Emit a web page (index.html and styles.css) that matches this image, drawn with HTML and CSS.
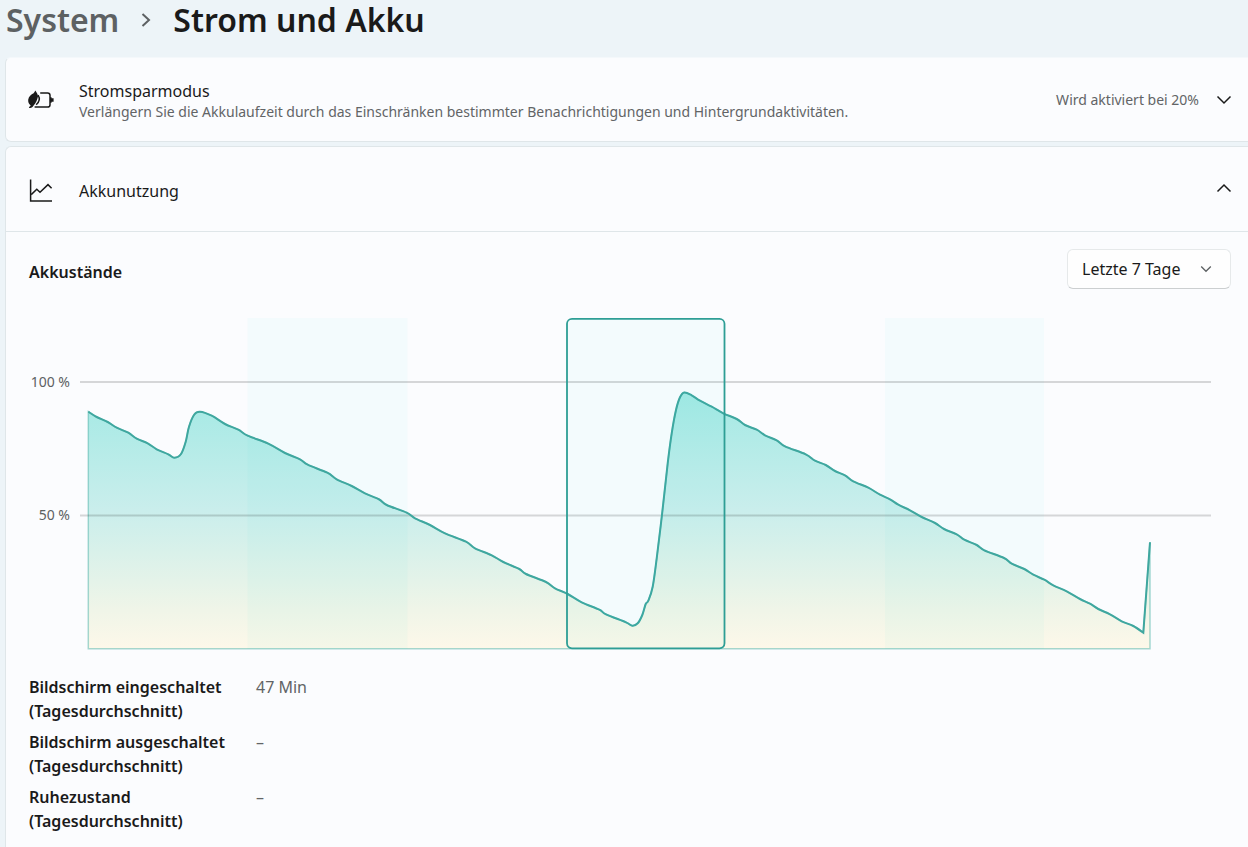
FILE: index.html
```html
<!DOCTYPE html>
<html lang="de">
<head>
    <meta charset="UTF-8">
    <meta name="viewport" content="width=device-width, initial-scale=1.0">
    <title>Strom und Akku</title>
    <link rel="stylesheet" href="styles.css">
</head>
<body>
    <nav class="breadcrumb">
        <a href="#">System</a>
        <svg class="separator" width="10" height="16" viewBox="0 0 10 16"><path d="M1.5 2 L8 8 L1.5 14"/></svg>
        <h1>Strom und Akku</h1>
    </nav>

    <main>
        <section class="card">
            <button class="card-header" type="button" aria-expanded="false">
                <svg class="icon" width="28" height="28" viewBox="0 0 28 28">
                    <path class="solid" d="M8.3 4.6 C9.3 6.2 11 8 11 10.6 C10.4 13.6 9 17 6.6 19.6 C5.8 21 4.4 22.3 2.6 22 C1.6 21.6 1.9 20.6 2.9 20.4 L3.7 19.4 C1.8 18.3 1 16.3 1.2 13.8 C1.6 10.4 4.2 8.2 6.6 7.2 C7.3 6.6 7.8 5.6 8.3 4.6 Z"/>
                    <path d="M11.1 9.2 C13 12.4 12.4 16 9.2 18.7"/>
                    <path d="M13.2 6.9 H20.6 Q23 6.9 23 9.3 V18.7 Q23 21.1 20.6 21.1 H7.6"/>
                    <path class="solid" d="M23 11.2 H24.6 V12.2 H26.6 V15.8 H24.6 V16.8 H23 Z"/>
                </svg>
                <span class="card-text">
                    <span class="card-title">Stromsparmodus</span>
                    <span class="card-description">Verlängern Sie die Akkulaufzeit durch das Einschränken bestimmter Benachrichtigungen und Hintergrundaktivitäten.</span>
                </span>
                <span class="card-value">Wird aktiviert bei 20%</span>
                <svg class="chevron" width="16" height="16" viewBox="0 0 16 16"><path d="M1.5 4.5 L8 11 L14.5 4.5"/></svg>
            </button>
        </section>

        <section class="card">
            <button class="card-header" type="button" aria-expanded="true">
                <svg class="icon" width="28" height="28" viewBox="0 0 28 28">
                    <path d="M3.6 4.5 V26 H25"/>
                    <path d="M4.2 19.6 L9.8 14.3 L13 17.2 L21 9.6 L24.6 13.2"/>
                </svg>
                <span class="card-text">
                    <span class="card-title">Akkunutzung</span>
                </span>
                <svg class="chevron" width="16" height="16" viewBox="0 0 16 16"><path d="M1.5 10.5 L8 4 L14.5 10.5"/></svg>
            </button>

            <div class="card-body">
                <div class="chart-header">
                    <h2>Akkustände</h2>
                    <div class="range">
                        <select aria-label="Zeitraum">
                            <option>Letzte 24 Stunden</option>
                            <option selected>Letzte 7 Tage</option>
                        </select>
                        <svg width="12" height="12" viewBox="0 0 12 12"><path d="M1.2 3.5 L6 8.3 L10.8 3.5"/></svg>
                    </div>
                </div>

                <svg class="chart" viewBox="29 317 1202 334">
                    <defs>
                        <linearGradient id="level" gradientUnits="userSpaceOnUse" x1="0" y1="393" x2="0" y2="649">
                            <stop offset="0" stop-color="#a3e9e4"/>
                            <stop offset="0.46" stop-color="#caeeec"/>
                            <stop offset="0.62" stop-color="#d9f1ea"/>
                            <stop offset="0.85" stop-color="#f0f5e8"/>
                            <stop offset="1" stop-color="#fdf8e9"/>
                        </linearGradient>
                    </defs>
                    <path id="area" class="area"/>
                    <rect class="day" x="247.5" y="318" width="160" height="331"/>
                    <rect class="day" x="885" y="318" width="159" height="331"/>
                    <path class="grid" d="M80 382 H1211 M80 515.5 H1211"/>
                    <text x="70" y="387">100 %</text>
                    <text x="70" y="520">50 %</text>
                    <path id="line" class="line"/>
                    <rect class="day selected" x="567" y="318.8" width="157.5" height="329.5" rx="5"/>
                </svg>

                <dl class="stats">
                    <dt>Bildschirm eingeschaltet (Tagesdurchschnitt)</dt>
                    <dd>47 Min</dd>
                    <dt>Bildschirm ausgeschaltet (Tagesdurchschnitt)</dt>
                    <dd>–</dd>
                    <dt>Ruhezustand (Tagesdurchschnitt)</dt>
                    <dd>–</dd>
                </dl>
            </div>
        </section>
    </main>

    <script>
        const points = [
            [88.3, 411.7], [96.7, 417], [107.7, 422], [116.7, 427.7], [128.3, 432.7], [136.7, 438.7],
            [147.7, 443.3], [156.7, 449.3], [168.3, 454.3], [174.3, 457.7], [181, 454], [185.7, 441.7],
            [189, 426.7], [194.3, 414.5], [200, 411.7], [211.7, 415.7], [225, 424], [238.3, 429.7],
            [247.7, 435.7], [268.3, 443.7], [285, 453], [300, 459.3], [307.7, 464.7], [327.3, 472.7],
            [336.7, 479.3], [351.7, 486], [365, 493.3], [379.3, 499.5], [386.7, 505], [406.7, 512.7],
            [415, 518.3], [430, 525], [445, 533.3], [466, 541.7], [475, 548.3], [491.7, 555.3],
            [503.3, 562], [519.3, 569], [526, 574], [546, 582], [555, 588.3], [567.7, 594],
            [581.7, 602.3], [599.3, 609.7], [606, 614.3], [626, 622.3], [632.3, 625.7], [637.7, 623.3],
            [642.3, 615], [645.7, 604], [648.3, 600.7], [652.7, 586.7], [656.7, 558.3], [662.3, 512],
            [667.7, 463.3], [671.7, 433.3], [676, 410], [680, 397.3], [684.3, 392.5], [691.7, 395.3],
            [700, 400.7], [711.7, 406.7], [723.3, 413.3], [736.7, 419], [745, 425], [756.7, 429.7],
            [765, 435.3], [776.7, 440.3], [785, 446.3], [805.7, 454.3], [815, 460.7], [825.7, 465],
            [835, 471], [845, 475.3], [853.3, 481.3], [868.3, 487.7], [880, 494.7], [890, 499.3],
            [898.3, 504.7], [910, 510.3], [921.7, 517], [935, 523], [944, 529], [956.7, 534.3],
            [964.3, 539.7], [976.7, 545], [984.3, 550.3], [1004, 558], [1011.7, 563.7], [1024.3, 569],
            [1033.3, 574.7], [1044.3, 579.7], [1053.3, 585.3], [1066.7, 591.3], [1080, 599], [1090, 603.7],
            [1098.3, 609], [1110, 614.3], [1121.7, 621.3], [1133.3, 626], [1143.3, 632.7]
        ];

        // smooth curve through all points
        function curve(pts) {
            let d = 'M' + pts[0];
            for (let i = 0; i < pts.length - 1; i++) {
                const p0 = pts[i - 1] || pts[i];
                const p1 = pts[i];
                const p2 = pts[i + 1];
                const p3 = pts[i + 2] || p2;
                d += ' C' + [
                    p1[0] + (p2[0] - p0[0]) / 6, p1[1] + (p2[1] - p0[1]) / 6,
                    p2[0] - (p3[0] - p1[0]) / 6, p2[1] - (p3[1] - p1[1]) / 6,
                    p2[0], p2[1]
                ].join(' ');
            }
            return d;
        }

        // charging at the end is a straight segment
        const line = curve(points) + ' L1150 542.3';
        document.getElementById('line').setAttribute('d', line);
        document.getElementById('area').setAttribute('d', line + ' V648.7 H88.3 Z');
    </script>
</body>
</html>
```
FILE: styles.css
```css
* {
    box-sizing: border-box;
}

body {
    margin: 0;
    background-color: #edf4f8;
    color: #1a1a1a;
    font-family: "Noto Sans", "Open Sans", sans-serif;
    font-size: 16px;
    line-height: 24px;
}

button,
select {
    font: inherit;
    color: inherit;
}

svg {
    fill: none;
    stroke: currentColor;
    stroke-width: 1.5;
    flex: none;
}

.breadcrumb {
    display: flex;
    align-items: center;
    padding: 0 6px;
    font-size: 32px;
    line-height: 40px;
    font-weight: 600;
}

.breadcrumb a {
    color: #5d6163;
    text-decoration: none;
}

.breadcrumb h1 {
    margin: 0;
    font-size: inherit;
    font-weight: inherit;
}

.separator {
    margin: 0 22px;
    color: #5d6163;
    stroke-width: 2;
}

main {
    display: flex;
    flex-direction: column;
    gap: 4px;
    margin: 17px 0 0 5px;
}

.card {
    background-color: #fbfcfe;
    border: 1px solid #dfe6e9;
    border-right: none;
    border-radius: 6px 0 0 6px;
}

.card:first-child {
    border-top-color: #f4f8fb;
}

.card:last-child {
    border-bottom: none;
    border-bottom-left-radius: 0;
}

.card-header {
    display: flex;
    align-items: center;
    width: 100%;
    min-height: 83px;
    padding: 0 16px 0 21px;
    background: none;
    border: none;
    text-align: left;
}

.card-header[aria-expanded="true"] {
    min-height: 84px;
}

.card-text {
    display: flex;
    flex-direction: column;
    flex: 1;
    margin-left: 24px;
    padding-top: 3px;
}

.card-title {
    line-height: 22px;
}

.card-description,
.card-value {
    color: #626466;
    font-size: 14px;
    line-height: 20px;
}

.chevron {
    margin-left: 17px;
}

.solid {
    fill: currentColor;
    stroke: none;
}

.card-body {
    padding: 17px 17px 16px 23px;
    border-top: 1px solid #dfe6e9;
}

.chart-header {
    display: flex;
    justify-content: space-between;
    align-items: center;
}

.chart-header h2 {
    margin: 6px 0 0;
    font-size: 16px;
    font-weight: 600;
}

.range {
    position: relative;
}

.range select {
    appearance: none;
    display: block;
    width: 164px;
    height: 40px;
    padding: 0 36px 0 14px;
    background-color: #fefefe;
    border: 1px solid #e6e9ea;
    border-bottom-color: #cccfd0;
    border-radius: 6px;
}

.range svg {
    position: absolute;
    top: 14px;
    right: 19px;
    color: #5d6163;
    stroke-width: 1.3;
    pointer-events: none;
}

.chart {
    display: block;
    width: 100%;
    margin: 28px 0 24px;
}

.chart text {
    fill: #5d6163;
    stroke: none;
    font-size: 14px;
    text-anchor: end;
}

.area {
    fill: url(#level);
    stroke: rgba(60, 170, 160, 0.45);
}

.day {
    fill: rgba(0, 215, 220, 0.03);
    stroke: none;
}

.grid {
    stroke: rgba(0, 0, 0, 0.15);
    stroke-width: 2;
}

.line {
    stroke: #3fa79f;
    stroke-width: 2;
}

.selected {
    stroke: #2e9e95;
    stroke-width: 1.8;
}

.stats {
    display: grid;
    grid-template-columns: 203px 1fr;
    gap: 7px 24px;
    margin: 0;
}

.stats dt {
    font-weight: 600;
}

.stats dd {
    margin: 0;
    color: #626466;
}
```
